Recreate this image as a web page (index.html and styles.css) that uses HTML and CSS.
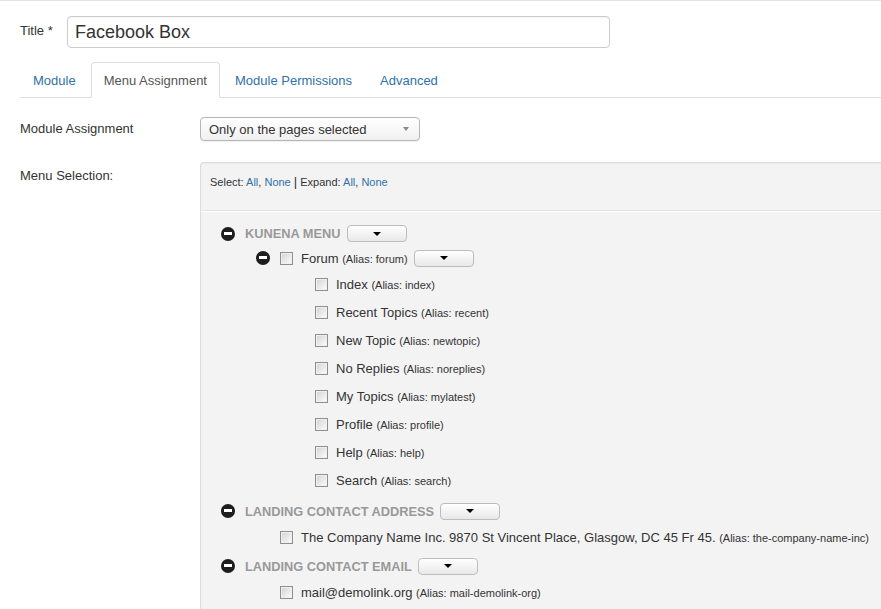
FILE: index.html
```html
<!DOCTYPE html>
<html>
<head>
<meta charset="utf-8">
<link rel="stylesheet" href="styles.css">
</head>
<body>
<div class="page">
  <div class="title-row">
    <label class="title-label">Title *</label>
    <div class="title-input">Facebook Box</div>
  </div>

  <ul class="tabs">
    <li class="tab"><a>Module</a></li>
    <li class="tab active"><a>Menu Assignment</a></li>
    <li class="tab"><a>Module Permissions</a></li>
    <li class="tab"><a>Advanced</a></li>
  </ul>

  <div class="form-row assign-row">
    <label class="row-label">Module Assignment</label>
    <div class="select">
      <span>Only on the pages selected</span>
      <span class="select-arrow"></span>
    </div>
  </div>

  <div class="form-row menu-row">
    <label class="row-label menu-label">Menu Selection:</label>
    <div class="panel">
      <div class="panel-tools">Select: <a>All</a>, <a>None</a> <span class="pipe">|</span> Expand: <a>All</a>, <a>None</a></div>
      <div class="separator"></div>
      <div class="tree">
        <div class="node header first">
          <span class="minus"></span>
          <span class="menu-name">Kunena Menu</span>
          <span class="dd"><span class="caret"></span></span>
        </div>
        <div class="node lvl1 parent">
          <span class="minus"></span>
          <span class="cb"></span>
          <span class="item">Forum <small>(Alias: forum)</small></span>
          <span class="dd"><span class="caret"></span></span>
        </div>
        <div class="node lvl2"><span class="cb"></span><span class="item">Index <small>(Alias: index)</small></span></div>
        <div class="node lvl2"><span class="cb"></span><span class="item">Recent Topics <small>(Alias: recent)</small></span></div>
        <div class="node lvl2"><span class="cb"></span><span class="item">New Topic <small>(Alias: newtopic)</small></span></div>
        <div class="node lvl2"><span class="cb"></span><span class="item">No Replies <small>(Alias: noreplies)</small></span></div>
        <div class="node lvl2"><span class="cb"></span><span class="item">My Topics <small>(Alias: mylatest)</small></span></div>
        <div class="node lvl2"><span class="cb"></span><span class="item">Profile <small>(Alias: profile)</small></span></div>
        <div class="node lvl2"><span class="cb"></span><span class="item">Help <small>(Alias: help)</small></span></div>
        <div class="node lvl2"><span class="cb"></span><span class="item">Search <small>(Alias: search)</small></span></div>

        <div class="node header">
          <span class="minus"></span>
          <span class="menu-name">Landing Contact Address</span>
          <span class="dd"><span class="caret"></span></span>
        </div>
        <div class="node lvl1 leaf"><span class="cb"></span><span class="item">The Company Name Inc. 9870 St Vincent Place, Glasgow, DC 45 Fr 45. <small>(Alias: the-company-name-inc)</small></span></div>

        <div class="node header email">
          <span class="minus"></span>
          <span class="menu-name">Landing Contact Email</span>
          <span class="dd"><span class="caret"></span></span>
        </div>
        <div class="node lvl1 leaf"><span class="cb"></span><span class="item">mail@demolink.org <small>(Alias: mail-demolink-org)</small></span></div>
      </div>
    </div>
  </div>
</div>
</body>
</html>
```

FILE: styles.css
```css
* { box-sizing: border-box; }

html, body {
  margin: 0;
  padding: 0;
  background: #fff;
  overflow: hidden;
  height: 609px;
}

body {
  font-family: "Liberation Sans", Arial, sans-serif;
  font-size: 13px;
  color: #333;
}

.page {
  border-top: 1px solid #e3e3e3;
  padding-left: 20px;
}

.title-row {
  display: flex;
  align-items: center;
  margin-top: 15px;
}

.title-label {
  width: 47px;
  font-size: 13px;
  line-height: 18px;
  margin-top: -3px;
}

.title-input {
  width: 543px;
  height: 32px;
  border: 1px solid #ccc;
  border-radius: 4px;
  font-size: 18px;
  line-height: 30px;
  padding-left: 7px;
  color: #333;
  box-shadow: inset 0 1px 1px rgba(0,0,0,0.05);
}

.tabs {
  list-style: none;
  margin: 14px 0 0 0;
  padding: 0;
  display: flex;
  border-bottom: 1px solid #ddd;
  height: 36px;
}

.tab {
  margin-right: 2px;
  margin-bottom: -1px;
}

.tab a {
  display: block;
  padding: 9px 12px 7px;
  line-height: 18px;
  border: 1px solid transparent;
  border-radius: 4px 4px 0 0;
  color: #3071a9;
  font-size: 13px;
}

.tab.active a {
  color: #555;
  background: #fff;
  border-color: #ddd #ddd transparent;
}

.form-row {
  display: flex;
}

.row-label {
  width: 180px;
  flex: none;
  line-height: 18px;
}

.assign-row {
  margin-top: 19px;
  align-items: center;
}

.select {
  width: 220px;
  height: 24px;
  border: 1px solid #b5b5b5;
  border-radius: 4px;
  background: linear-gradient(#ffffff, #f0f0f0);
  box-shadow: 0 1px 1px rgba(0,0,0,0.06);
  display: flex;
  align-items: center;
  justify-content: space-between;
  padding: 0 10px 0 8px;
  font-size: 13px;
  color: #333;
}

.select-arrow {
  width: 0;
  height: 0;
  border-left: 3px solid transparent;
  border-right: 3px solid transparent;
  border-top: 4px solid #888;
}

.menu-row {
  margin-top: 21px;
  align-items: flex-start;
}

.menu-label {
  padding-top: 5px;
}

.panel {
  flex: 1;
  background: #f3f3f3;
  border-top: 1px solid #dcdcdc;
  border-left: 1px solid #dcdcdc;
  border-radius: 4px 0 0 0;
  height: 460px;
  box-shadow: inset 0 1px 2px rgba(0,0,0,0.04);
}

.panel-tools {
  font-size: 11px;
  line-height: 16px;
  padding: 11px 0 0 9px;
  color: #333;
}

.panel-tools a {
  color: #3071a9;
}

.pipe {
  font-size: 13px;
}

.separator {
  margin-top: 20px;
  border-top: 1px solid #e2e2e2;
  border-bottom: 1px solid #fff;
}

.tree {
  padding-top: 9px;
  padding-left: 20px;
}

.node {
  display: flex;
  align-items: center;
}

.header {
  height: 26px;
  margin-top: 4px;
}

.header.first {
  margin-top: 0;
  height: 25px;
}

.header.email {
  margin-top: 3px;
}

.minus {
  width: 14px;
  height: 14px;
  border-radius: 50%;
  background: #1e1e1e;
  position: relative;
  flex: none;
  margin-right: 10px;
}

.minus::after {
  content: "";
  position: absolute;
  left: 3px;
  top: 5px;
  width: 8px;
  height: 3px;
  background: #fff;
}

.menu-name {
  font-weight: bold;
  text-transform: uppercase;
  color: #999;
  font-size: 12.8px;
  margin-right: 6px;
}

.dd {
  width: 60px;
  height: 17px;
  border: 1px solid #bdbdbd;
  border-radius: 4px;
  background: linear-gradient(#ffffff, #e8e8e8);
  display: flex;
  align-items: center;
  justify-content: center;
  flex: none;
}

.caret {
  width: 0;
  height: 0;
  border-left: 4px solid transparent;
  border-right: 4px solid transparent;
  border-top: 4px solid #000;
}

.lvl1.parent {
  height: 24px;
  padding-left: 35px;
}

.lvl1.parent .item {
  margin-right: 6px;
}

.lvl1.leaf {
  height: 26px;
  padding-left: 59px;
}

.lvl2 {
  height: 28px;
  padding-left: 94px;
}

.cb {
  width: 13px;
  height: 13px;
  border: 1px solid #8f8f8f;
  background: linear-gradient(135deg, #d2d2d2, #fdfdfd);
  box-shadow: inset 0 0 0 1px #efefef;
  flex: none;
  margin-right: 8px;
}

.item {
  font-size: 13px;
  color: #333;
  white-space: nowrap;
}

.item small {
  font-size: 11px;
}
```
